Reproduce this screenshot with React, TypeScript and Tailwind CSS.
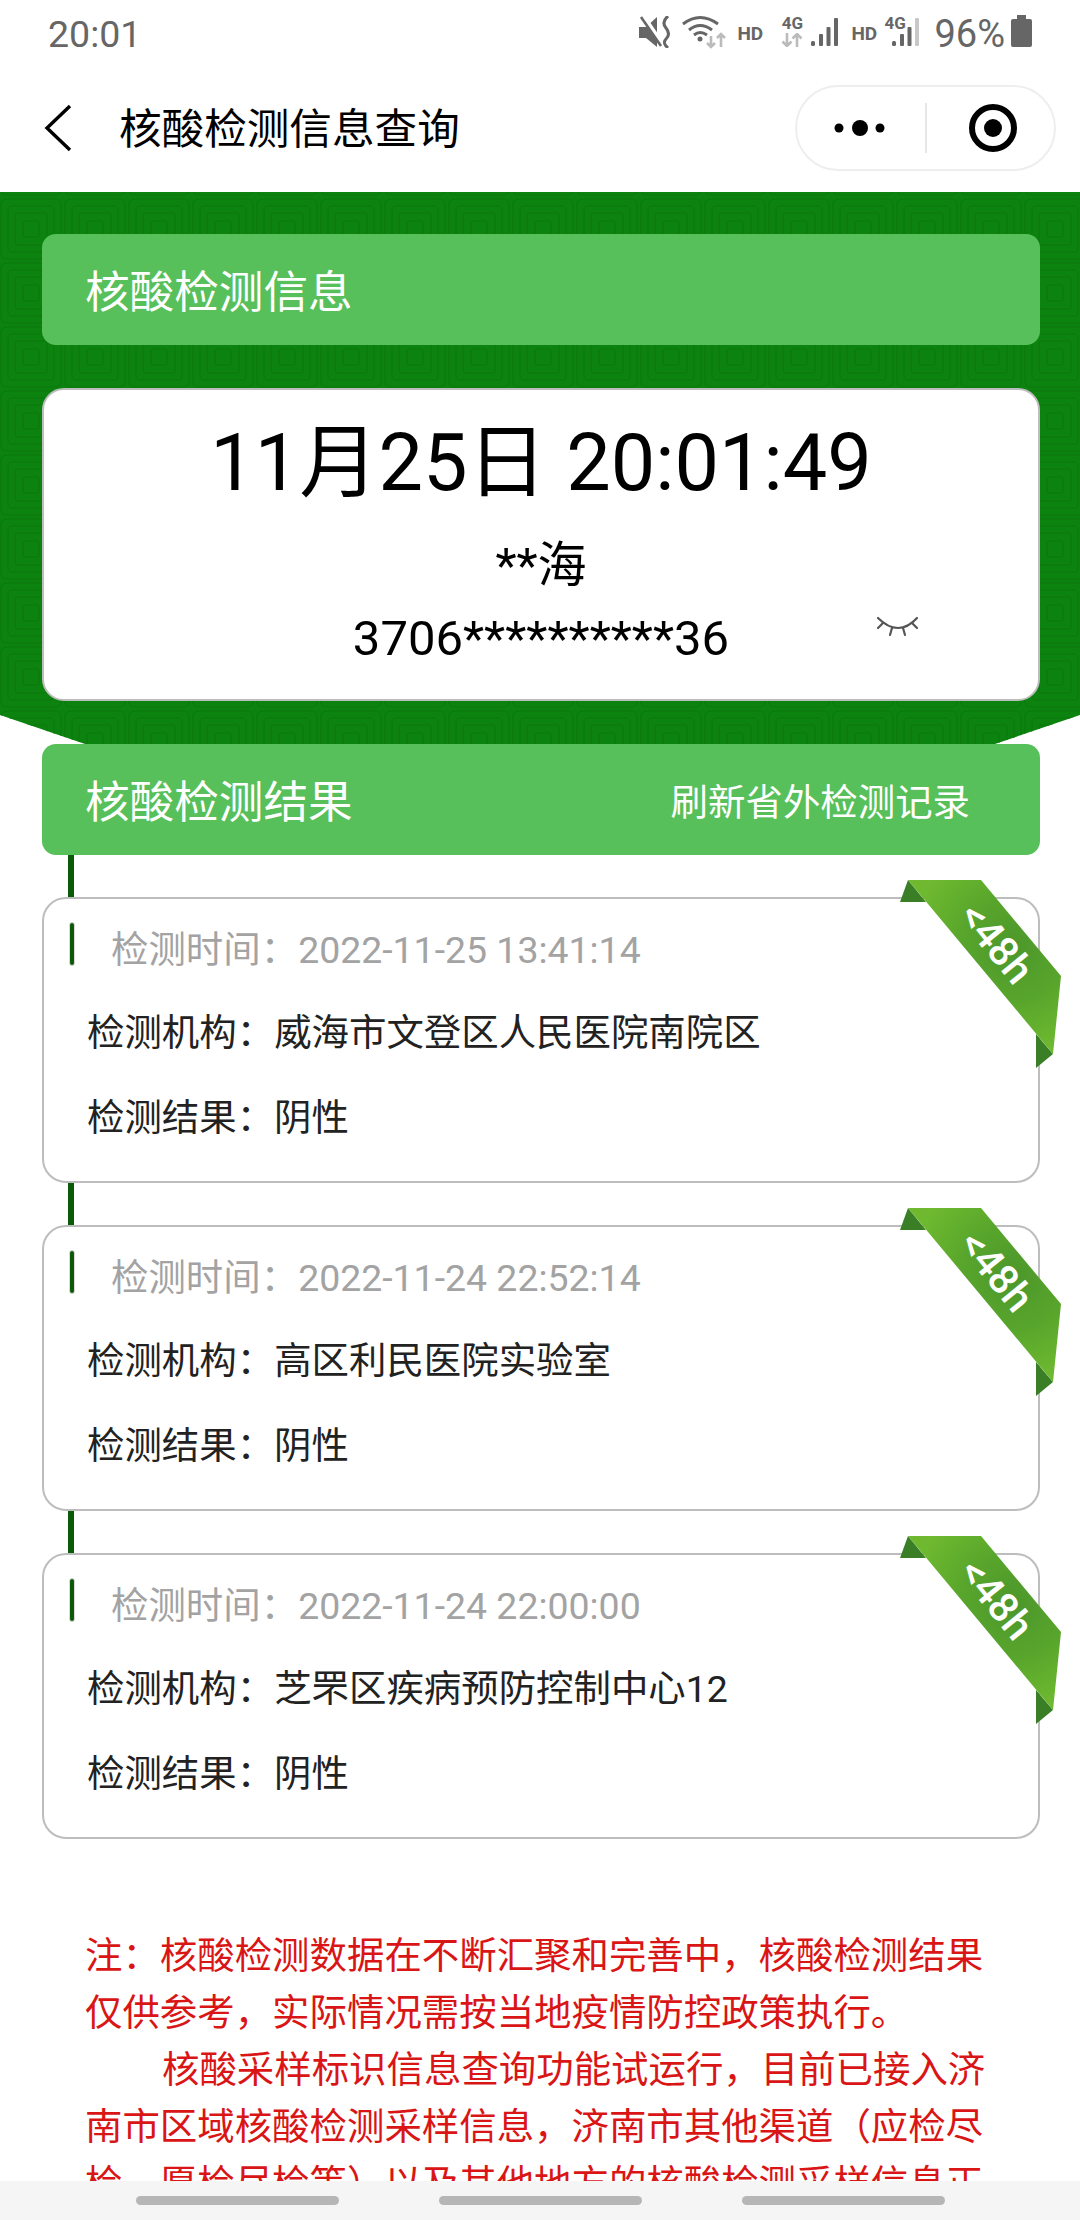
import { ReactNode } from 'react';

const results = [
  { time: '2022-11-25 13:41:14', org: '威海市文登区人民医院南院区' },
  { time: '2022-11-24 22:52:14', org: '高区利民医院实验室' },
  { time: '2022-11-24 22:00:00', org: '芝罘区疾病预防控制中心12' },
];

const Arrows = ({ className }: { className: string }) => (
  <svg className={className} viewBox="0 0 22 14" fill="none" stroke="#bbb" strokeWidth="2.6">
    <path d="M6 0v13M1.5 8.5 6 13l4.5-4.5" />
    <path d="M16 14V1M11.5 5.5 16 1l4.5 4.5" />
  </svg>
);

const Bars = ({ last = '#666' }: { last?: string }) => (
  <svg className="block h-[28px] w-[27px]" viewBox="0 0 27 28">
    <rect x="0" y="23" width="4" height="5" rx="1.5" fill="#666" />
    <rect x="8" y="16" width="4" height="12" rx="1" fill="#666" />
    <rect x="15.5" y="9" width="4" height="19" rx="1" fill="#666" />
    <rect x="23" y="0" width="4" height="28" rx="1" fill={last} />
  </svg>
);

const Hd = ({ className }: { className: string }) => (
  <span className={`w-[26px] text-[19px] leading-none font-bold text-[#666] ${className}`}>HD</span>
);

const StatusBar = () => (
  <div className="flex h-[64px] items-start justify-between px-[48px] text-[#666]">
    <span className="mt-[12px] text-[37.5px] leading-[44px]">20:01</span>
    <div className="flex h-[64px] items-start">
      <svg className="mt-[16px] h-[32px] w-[32px]" viewBox="0 0 32 32" fill="none">
        <path d="M0 11h7L18 1v30L7 22H0z" fill="#666" />
        <path d="M3 -1 25 31" stroke="#fff" strokeWidth="5" />
        <path d="M2 1 22 30" stroke="#666" strokeWidth="2.6" />
        <path d="M29 0Q22 6 27 12Q32 18 27 23Q23 27 29 32" stroke="#666" strokeWidth="3" />
      </svg>
      <svg className="mt-[15px] ml-[11px] h-[34px] w-[44px]" viewBox="0 0 44 34" fill="none">
        <path d="M1 9Q18 -4 36 9" stroke="#666" strokeWidth="3" />
        <path d="M7 15Q18 6 30 15" stroke="#666" strokeWidth="3" />
        <path d="M12 20Q18 15 25 20" stroke="#666" strokeWidth="3" />
        <circle cx="18" cy="24" r="2.5" fill="#666" />
        <g stroke="#bbb" strokeWidth="2.6">
          <path d="M29 21v11M25 28l4 4 4-4" />
          <path d="M39 32V19M35 23l4-4 4 4" />
        </g>
      </svg>
      <Hd className="mt-[24px] ml-[11px]" />
      <div className="mt-[16px] ml-[18px] flex w-[22px] flex-col items-center">
        <span className="text-[17px] leading-[15px] font-bold text-[#666]">4G</span>
        <Arrows className="mt-[2px] h-[14px] w-[22px]" />
      </div>
      <div className="mt-[18px] ml-[8px]">
        <Bars />
      </div>
      <Hd className="mt-[24px] ml-[13px]" />
      <div className="relative mt-[18px] ml-[7px] h-[28px] w-[35px]">
        <span className="absolute -top-[2px] left-0 text-[17px] leading-[15px] font-bold text-[#666]">4G</span>
        <div className="absolute top-0 right-0">
          <Bars last="#c8c8c8" />
        </div>
      </div>
      <span className="mt-[12px] ml-[15px] text-[38px] leading-[44px]">96%</span>
      <svg className="mt-[15px] ml-[6px] h-[32px] w-[21px]" viewBox="0 0 21 32" fill="#666">
        <path d="M6 0h9v4H6z" />
        <rect x="0" y="4" width="21" height="28" rx="2" />
      </svg>
    </div>
  </div>
);

const NavBar = () => (
  <div className="flex h-[128px] items-center">
    <svg className="ml-[44px] h-[48px] w-[28px]" viewBox="0 0 28 48" fill="none" stroke="#000" strokeWidth="3.4">
      <path d="M26 2 3 24l23 22" />
    </svg>
    <span className="ml-[47px] pt-[3px] text-[42.6px] leading-none text-black">核酸检测信息查询</span>
    <div className="mr-[24px] ml-auto flex h-[86px] w-[261px] items-center rounded-[43px] border-2 border-[#eeeeee]">
      <svg className="ml-[33px] h-[20px] w-[60px]" viewBox="0 0 60 20" fill="#000">
        <circle cx="9" cy="10" r="4.5" />
        <circle cx="30" cy="10" r="8" />
        <circle cx="50" cy="10" r="4.5" />
      </svg>
      <div className="ml-[35px] h-[50px] w-[2px] bg-[#e6e6e6]" />
      <svg className="ml-[42px] h-[48px] w-[48px]" viewBox="0 0 48 48">
        <circle cx="24" cy="24" r="21" fill="none" stroke="#000" strokeWidth="6" />
        <circle cx="24" cy="24" r="9" fill="#000" />
      </svg>
    </div>
  </div>
);

const Pattern = () => (
  <svg className="absolute inset-0 h-full w-full" aria-hidden="true">
    <defs>
      <pattern id="rings" x="-1" y="5" width="64" height="64" patternUnits="userSpaceOnUse">
        <g fill="none" stroke="#0b7a0d" strokeWidth="1.6">
          <rect x="2" y="2" width="60" height="60" rx="5" />
          <rect x="9" y="9" width="46" height="46" rx="4" />
          <rect x="16" y="16" width="32" height="32" rx="3" />
          <rect x="24" y="24" width="16" height="16" rx="3" />
        </g>
      </pattern>
    </defs>
    <rect width="100%" height="100%" fill="#0d830f" />
    <rect width="100%" height="100%" fill="url(#rings)" />
  </svg>
);

const SectionHeader = ({ children }: { children: ReactNode }) => (
  <div className="relative flex h-[111px] items-center justify-between rounded-[14px] bg-[#57c05a] pt-[8px] pr-[70px] pl-[43px] text-white">
    {children}
  </div>
);

const Ribbon = () => (
  <>
    <svg className="absolute -top-[23px] -right-[27px] h-[195px] w-[170px]" viewBox="0 0 170 195">
      <defs>
        <radialGradient id="band" cx="120" cy="72" r="105" gradientUnits="userSpaceOnUse">
          <stop offset="0" stopColor="#4c972b" />
          <stop offset="0.5" stopColor="#58a52c" />
          <stop offset="1" stopColor="#6eb92f" />
        </radialGradient>
      </defs>
      <path d="M13 4 5 26h26z" fill="#3a7f26" />
      <path d="M141 158v34l17-14z" fill="#3a7f26" />
      <path d="M13 4h73l80 96-8 78z" fill="url(#band)" />
    </svg>
    <span className="absolute top-[24px] right-[-3px] rotate-[51deg] text-[41px] leading-none font-medium text-white">
      {'<48h'}
    </span>
  </>
);

const ResultCard = ({ time, org }: { time: string; org: string }) => (
  <div className="relative h-[286px] rounded-[24px] border-2 border-[#bdbdbd] bg-white text-[37.44px] leading-none">
    <div className="absolute top-[23px] left-[25px] h-[44px] w-[6px] rounded-full border border-[#e5d8d8] bg-[#0a5a0a]" />
    <div className="flex h-[103px] items-center pl-[67px] text-[#a3a3a3]">
      检测时间：{time}
    </div>
    <div className="flex h-[64px] items-center pl-[43px] text-[#222]">检测机构：{org}</div>
    <div className="flex h-[105px] items-center pl-[43px] text-[#222]">检测结果：阴性</div>
    <Ribbon />
  </div>
);

const App = () => {
  return (
    <div className="relative h-[2220px] w-[1080px] overflow-hidden bg-white font-[Roboto,'Noto_Sans_CJK_SC',sans-serif]">
      <StatusBar />
      <NavBar />

      <section className="relative h-[552px] pt-[42px] pr-[40px] pl-[42px] [clip-path:polygon(0_0,100%_0,100%_523px,995px_100%,85px_100%,0_523px)]">
        <Pattern />
        <SectionHeader>
          <span className="text-[44.6px] leading-none">核酸检测信息</span>
        </SectionHeader>
        <div className="relative mt-[43px] flex h-[313px] flex-col items-center rounded-[22px] border-2 border-[#bdbdbd] bg-white text-black">
          <div className="mt-[25px] text-[79.2px] leading-[96px]">11月25日 20:01:49</div>
          <div className="mt-[25px] text-[49px] leading-[60px]">**海</div>
          <div className="mt-[13px] text-[49px] leading-[60px]">3706**********36</div>
          <svg className="absolute top-[226px] left-[832px] h-[24px] w-[44px]" viewBox="0 0 44 24" fill="none" stroke="#555" strokeWidth="2.2" strokeLinecap="round">
            <path d="M2 2Q12 12 22 12Q32 12 41 2" />
            <path d="M7 7 2 12M16 12l-2 7M27 12l2 7M36 7l5 5" />
          </svg>
        </div>
      </section>

      <div className="pr-[40px] pl-[42px]">
        <SectionHeader>
          <span className="text-[44.6px] leading-none">核酸检测结果</span>
          <span className="text-[37.44px] leading-none">刷新省外检测记录</span>
        </SectionHeader>
        {results.map((item) => (
          <div key={item.time}>
            <div className="ml-[26px] h-[42px] w-[6px] bg-[#0a5a0a]" />
            <ResultCard time={item.time} org={item.org} />
          </div>
        ))}
      </div>

      <div className="mt-[89px] pl-[85px] text-[37.44px] leading-[57px] text-[#d91515]">
        <p className="w-[905px]">注：核酸检测数据在不断汇聚和完善中，核酸检测结果仅供参考，实际情况需按当地疫情防控政策执行。</p>
        <p className="w-[905px] indent-[77px]">
          核酸采样标识信息查询功能试运行，目前已接入济南市区域核酸检测采样信息，济南市其他渠道（应检尽检、愿检尽检等）以及其他地方的核酸检测采样信息正在陆续接入中。
        </p>
      </div>

      <div className="absolute right-0 bottom-0 left-0 h-[39px] bg-[#f5f5f5]">
        <div className="absolute top-[15px] left-[136px] h-[9px] w-[203px] rounded-full bg-[#b6b6b6]" />
        <div className="absolute top-[15px] left-[439px] h-[9px] w-[203px] rounded-full bg-[#b6b6b6]" />
        <div className="absolute top-[15px] left-[742px] h-[9px] w-[203px] rounded-full bg-[#b6b6b6]" />
      </div>
    </div>
  );
};

export default App;
